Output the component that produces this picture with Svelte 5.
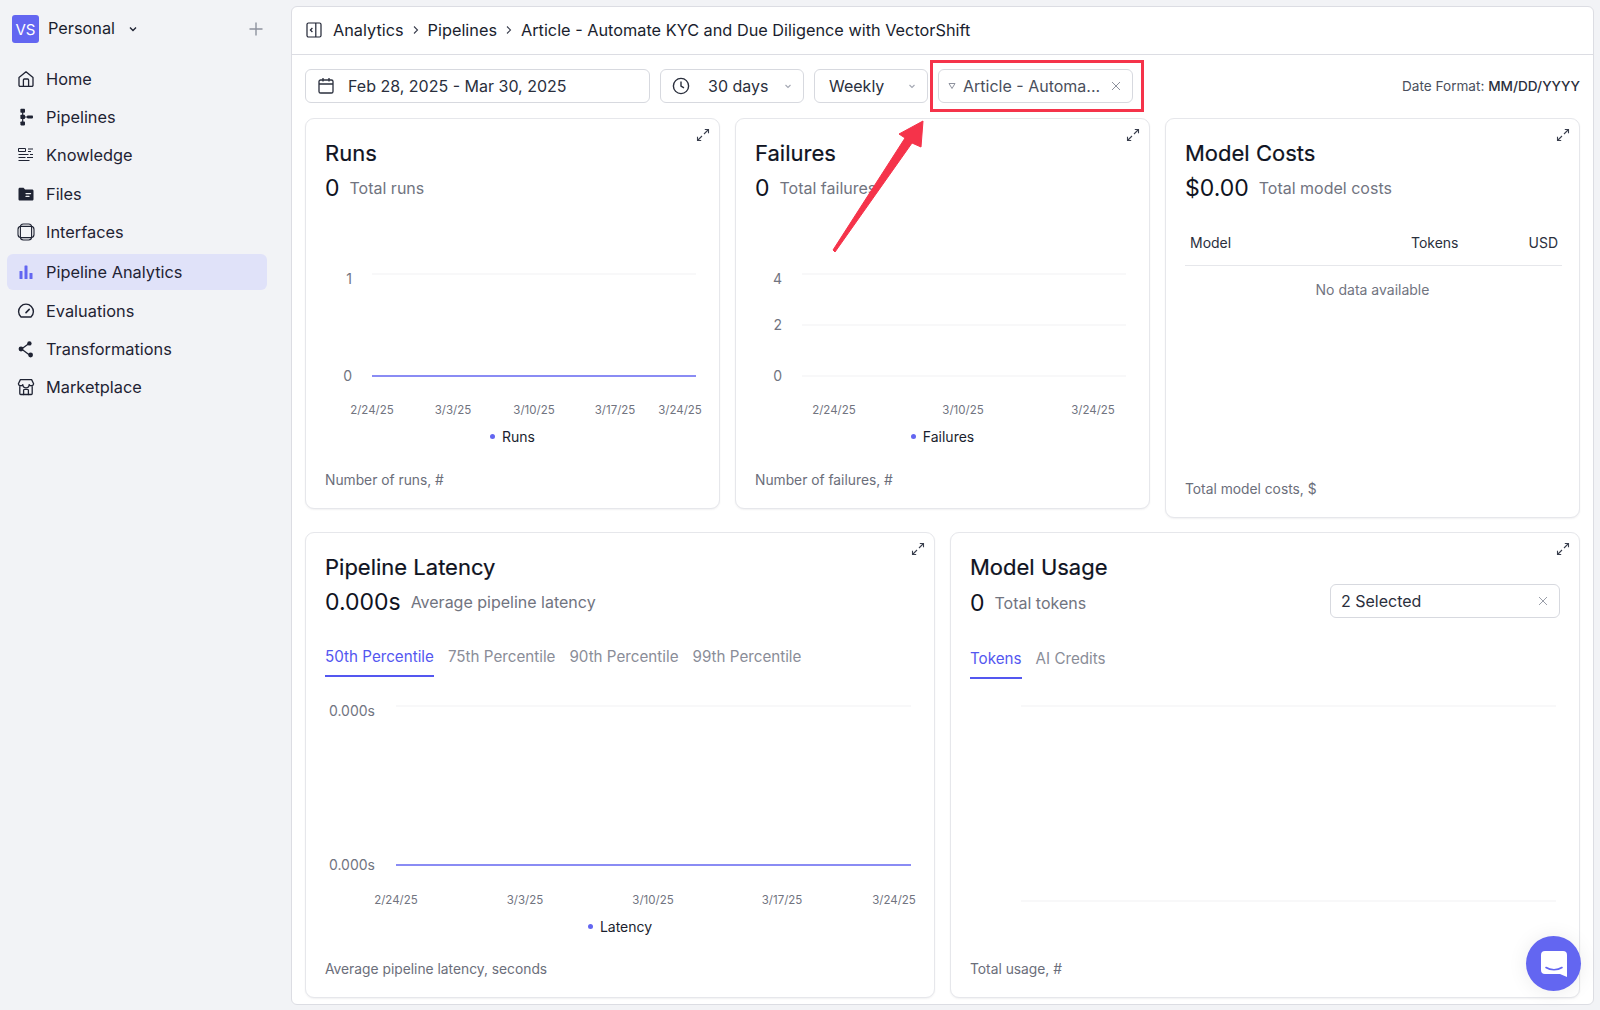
<script>
  const navItems = [
    { label: "Home", icon: "home" },
    { label: "Pipelines", icon: "pipelines" },
    { label: "Knowledge", icon: "knowledge" },
    { label: "Files", icon: "files" },
    { label: "Interfaces", icon: "interfaces" },
    { label: "Pipeline Analytics", icon: "analytics", active: true },
    { label: "Evaluations", icon: "evaluations" },
    { label: "Transformations", icon: "transformations" },
    { label: "Marketplace", icon: "marketplace" },
  ];

  const crumbs = ["Analytics", "Pipelines", "Article - Automate KYC and Due Diligence with VectorShift"];

  // coordinates are local to each chart's svg
  const runsChart = {
    width: 412, height: 222, x1: 66, x2: 390,
    grid: [{ y: 72, label: "1", ly: 78 }, { y: 174, label: "0", ly: 175, line: true }],
    labelX: 46, tickY: 209,
    ticks: [[66, "2/24/25"], [147, "3/3/25"], [228, "3/10/25"], [309, "3/17/25"], [374, "3/24/25"]],
  };
  const failuresChart = {
    width: 412, height: 222, x1: 66, x2: 390,
    grid: [{ y: 72, label: "4", ly: 78 }, { y: 123, label: "2", ly: 124 }, { y: 174, label: "0", ly: 175 }],
    labelX: 46, tickY: 209,
    ticks: [[98, "2/24/25"], [227, "3/10/25"], [357, "3/24/25"]],
  };
  const latencyChart = {
    width: 628, height: 237, x1: 90, x2: 605,
    grid: [{ y: 29, label: "0.000s", ly: 35 }, { y: 188, label: "0.000s", ly: 189, line: true }],
    labelX: 69, tickY: 224,
    ticks: [[90, "2/24/25"], [219, "3/3/25"], [347, "3/10/25"], [476, "3/17/25"], [588, "3/24/25"]],
  };
  const usageChart = {
    width: 628, height: 270, x1: 70, x2: 605,
    grid: [{ y: 27 }, { y: 222 }],
    labelX: 50, tickY: 0, ticks: [],
  };

  const latencyTabs = ["50th Percentile", "75th Percentile", "90th Percentile", "99th Percentile"];
</script>

{#snippet navIcon(name)}
  <svg class="nav-icon" viewBox="0 0 18 18" width="18" height="18" fill="none" stroke="#1f2333" stroke-width="1.3" stroke-linecap="round" stroke-linejoin="round">
    {#if name === "home"}
      <path d="M2 7.6 9 1.8l7 5.8v7.6a1.2 1.2 0 0 1-1.2 1.2H3.2A1.2 1.2 0 0 1 2 15.2Z" />
      <path d="M6.4 16.4V10a1 1 0 0 1 1-1h3.2a1 1 0 0 1 1 1v6.4" />
    {:else if name === "pipelines"}
      <path d="M5.7 3v12M5.7 9H12" stroke-width="1.2" />
      <g fill="#1f2333" stroke="none">
        <rect x="3.4" y="0.8" width="4.6" height="4" rx="0.8" />
        <rect x="3.4" y="6.8" width="4.6" height="4.2" rx="0.8" />
        <rect x="3.4" y="13.4" width="4.6" height="4" rx="0.8" />
        <rect x="10" y="7.6" width="6" height="2.8" rx="0.8" />
      </g>
    {:else if name === "knowledge"}
      <g stroke-width="1" stroke-linecap="butt">
        <rect x="1.5" y="2.5" width="7" height="3" />
        <path d="M11 3h5M11 5.5h3M1.5 8.5h10M13 8.5h3M1.5 11.5h7M10 11.5h6M1.5 14.5h11" />
      </g>
    {:else if name === "files"}
      <path d="M1.5 4.2c0-.8.6-1.4 1.4-1.4h3.6l1.6 1.8h7c.8 0 1.4.6 1.4 1.4v8.2c0 .8-.6 1.4-1.4 1.4H2.9c-.8 0-1.4-.6-1.4-1.4Z" fill="#1f2333" stroke="none" />
      <path d="M9 8.6h4.6M9 11.4h3" stroke="#f2f3f6" stroke-width="1.2" />
    {:else if name === "interfaces"}
      <rect x="1" y="3.4" width="16" height="11.2" rx="3" stroke-width="1.1" />
      <rect x="3.4" y="1" width="11.2" height="16" rx="3" stroke-width="1.1" />
    {:else if name === "analytics"}
      <g fill="#6366f1" stroke="none">
        <rect x="2.5" y="8" width="3" height="8" rx=".6" />
        <rect x="7.5" y="2.5" width="3" height="13.5" rx=".6" />
        <rect x="12.5" y="10" width="3" height="6" rx=".6" />
      </g>
    {:else if name === "evaluations"}
      <path d="M4 15a7.4 7.4 0 1 1 10 0Z" stroke-width="1.4" />
      <path d="m9 10.6 3.2-3.2" stroke-width="1.6" />
    {:else if name === "transformations"}
      <path d="M12 3.5 4.5 9l8 6" stroke-width="1.3" />
      <g fill="#1f2333" stroke="none">
        <circle cx="12.4" cy="3.4" r="2.2" />
        <circle cx="4" cy="9" r="2.4" />
        <circle cx="13.6" cy="15" r="2.4" />
      </g>
    {:else if name === "marketplace"}
      <path d="M3.4 1.6h11.2l2 4.2a2.4 2.4 0 0 1-4.4.8 2.8 2.8 0 0 1-6.4 0 2.4 2.4 0 0 1-4.4-.8Z" />
      <path d="M2.8 8.6v7c0 .5.4.9.9.9h10.6c.5 0 .9-.4.9-.9v-7" />
      <path d="M6.6 16.5v-4.2c0-.5.4-.9.9-.9h3c.5 0 .9.4.9.9v4.2" />
    {/if}
  </svg>
{/snippet}

{#snippet expand()}
  <svg class="expand" viewBox="0 0 14 14" width="14" height="14" fill="none" stroke="#3a3f4e" stroke-width="1.1">
    <path d="M8 6 12.5 1.5M8.8 1.5h3.7v3.7M6 8 1.5 12.5M1.5 8.8v3.7h3.7" />
  </svg>
{/snippet}

{#snippet chevron()}
  <svg class="chev" viewBox="0 0 10 10" width="10" height="10" fill="none" stroke="#a3a7b2" stroke-width="1.1">
    <path d="m2.5 4 2.5 2.5L7.5 4" />
  </svg>
{/snippet}

{#snippet cross(color)}
  <svg viewBox="0 0 10 10" width="10" height="10" fill="none" stroke={color} stroke-width="1">
    <path d="m1 1 8 8M9 1 1 9" />
  </svg>
{/snippet}

{#snippet chart(c)}
  <svg class="chart" width={c.width} height={c.height}>
    {#each c.grid as g}
      <line x1={c.x1} x2={c.x2} y1={g.y} y2={g.y} stroke={g.line ? "#6366f1" : "#f1f2f4"} stroke-width={g.line ? 1.4 : 1.2} />
      {#if g.label}
        <text class="y-label" x={c.labelX} y={g.ly} text-anchor="end" dominant-baseline="middle">{g.label}</text>
      {/if}
    {/each}
    {#each c.ticks as [x, t]}
      <text class="tick" {x} y={c.tickY} text-anchor="middle" dominant-baseline="middle">{t}</text>
    {/each}
  </svg>
{/snippet}

{#snippet legend(name)}
  <div class="legend"><span class="dot"></span>{name}</div>
{/snippet}

<div class="page">
  <aside class="sidebar">
    <div class="workspace">
      <span class="logo">VS</span>
      <span class="ws-name">Personal</span>
      <svg class="ws-chev" viewBox="0 0 10 10" width="10" height="10" fill="none" stroke="#1f2333" stroke-width="1.4"><path d="m2 3.5 3 3 3-3" /></svg>
      <svg class="ws-plus" viewBox="0 0 14 14" width="14" height="14" stroke="#8e929e" stroke-width="1.4"><path d="M7 0.5v13M0.5 7h13" /></svg>
    </div>
    <nav>
      {#each navItems as item}
        <div class="nav-item" class:active={item.active}>
          {@render navIcon(item.icon)}
          <span>{item.label}</span>
        </div>
      {/each}
    </nav>
  </aside>

  <main class="panel">
    <header class="crumbs">
      <svg viewBox="0 0 18 18" width="18" height="18" fill="none" stroke="#1f2333" stroke-width="1.2">
        <rect x="2" y="2" width="14" height="14" rx="1.5" />
        <path d="M10.8 2v14M7.4 7 5.4 9l2 2" />
      </svg>
      {#each crumbs as crumb, i}
        {#if i > 0}
          <svg viewBox="0 0 10 10" width="10" height="10" fill="none" stroke="#3a3f4e" stroke-width="1.1"><path d="m3 1.5 3.5 3.5L3 8.5" /></svg>
        {/if}
        <span>{crumb}</span>
      {/each}
    </header>

    <div class="toolbar">
      <div class="control date">
        <svg viewBox="0 0 18 18" width="18" height="18" fill="none" stroke="#2a2f3d" stroke-width="1.3">
          <rect x="2" y="3" width="14" height="13" rx="1.6" />
          <path d="M2 7h14M6 1v3.4M12 1v3.4" />
        </svg>
        <span>Feb 28, 2025 - Mar 30, 2025</span>
      </div>
      <div class="control days">
        <svg viewBox="0 0 18 18" width="18" height="18" fill="none" stroke="#2a2f3d" stroke-width="1.4">
          <circle cx="9" cy="9" r="7.6" />
          <path d="M9 4.4V9l3 1.8" />
        </svg>
        <span>30 days</span>
        {@render chevron()}
      </div>
      <div class="control weekly">
        <span>Weekly</span>
        {@render chevron()}
      </div>
      <div class="filter-mark">
        <div class="control filter">
          <svg viewBox="0 0 8 8" width="8" height="8" fill="none" stroke="#8e929e" stroke-width="1"><path d="M1 1.5h6L4 6.5Z" /></svg>
          <span>Article - Automa...</span>
          {@render cross("#8e929e")}
        </div>
      </div>
      <div class="date-format">Date Format: <b>MM/DD/YYYY</b></div>
    </div>

    <div class="row top">
      <section class="card">
        {@render expand()}
        <h2>Runs</h2>
        <div class="stat"><strong>0</strong><span>Total runs</span></div>
        {@render chart(runsChart)}
        {@render legend("Runs")}
        <footer>Number of runs, #</footer>
      </section>

      <section class="card">
        {@render expand()}
        <h2>Failures</h2>
        <div class="stat"><strong>0</strong><span>Total failures</span></div>
        {@render chart(failuresChart)}
        {@render legend("Failures")}
        <footer>Number of failures, #</footer>
      </section>

      <section class="card costs">
        {@render expand()}
        <h2>Model Costs</h2>
        <div class="stat"><strong>$0.00</strong><span>Total model costs</span></div>
        <div class="table-head">
          <span class="col-model">Model</span>
          <span>Tokens</span>
          <span class="col-usd">USD</span>
        </div>
        <div class="no-data">No data available</div>
        <footer>Total model costs, $</footer>
      </section>
    </div>

    <div class="row bottom">
      <section class="card">
        {@render expand()}
        <h2>Pipeline Latency</h2>
        <div class="stat"><strong>0.000s</strong><span>Average pipeline latency</span></div>
        <div class="tabs">
          {#each latencyTabs as tab, i}
            <span class="tab" class:selected={i === 0}>{tab}</span>
          {/each}
        </div>
        {@render chart(latencyChart)}
        {@render legend("Latency")}
        <footer>Average pipeline latency, seconds</footer>
      </section>

      <section class="card">
        {@render expand()}
        <h2>Model Usage</h2>
        <div class="usage-head">
          <div class="stat"><strong>0</strong><span>Total tokens</span></div>
          <div class="control selected-box">
            <span>2 Selected</span>
            {@render cross("#9a9ea9")}
          </div>
        </div>
        <div class="tabs usage-tabs">
          <span class="tab selected">Tokens</span>
          <span class="tab">AI Credits</span>
        </div>
        {@render chart(usageChart)}
        <footer class="push">Total usage, #</footer>
      </section>
    </div>
  </main>

  <!-- annotation arrow drawn over the screenshot -->
  <svg class="arrow" viewBox="0 0 100 140" width="100" height="140">
    <path d="M93 5 69 18l6 4L3 134l2 2L82 27l9 4Z" fill="#f5334a" stroke="#f5334a" stroke-width="1" stroke-linejoin="round" />
  </svg>

  <button class="chat" aria-label="Chat">
    <svg viewBox="0 0 28 28" width="28" height="28">
      <path d="M5 1h18a4 4 0 0 1 4 4v22l-7-3H5a4 4 0 0 1-4-4V5a4 4 0 0 1 4-4Z" fill="#fff" />
      <path d="M6 17.5c4.5 3 11.5 3 16 0" fill="none" stroke="#6366f1" stroke-width="1.6" stroke-linecap="round" />
    </svg>
  </button>
</div>

<style>
  :global(body) {
    margin: 0;
    background: #f2f3f6;
  }

  .page {
    display: flex;
    width: 1600px;
    height: 1010px;
    font-family: Inter, "Liberation Sans", sans-serif;
    color: #1a1e2e;
    overflow: hidden;
    position: relative;
  }

  .sidebar {
    width: 291px;
    flex: none;
    box-sizing: border-box;
    padding: 15px 24px 0 7px;
  }

  .workspace {
    display: flex;
    align-items: center;
    height: 28px;
    padding-left: 5px;
    margin-bottom: 16.5px;
  }

  .logo {
    width: 27px;
    height: 28px;
    border-radius: 3px;
    background: #6366f1;
    color: #fff;
    font-size: 15px;
    display: flex;
    align-items: center;
    justify-content: center;
  }

  .ws-name {
    margin: -2px 0 0 9px;
    font-size: 16.3px;
  }

  .ws-chev {
    margin-left: 13px;
  }

  .ws-plus {
    margin-left: auto;
    margin-right: 4px;
  }

  nav {
    display: flex;
    flex-direction: column;
  }

  .nav-item {
    display: flex;
    align-items: center;
    gap: 11px;
    height: 38.4px;
    padding-left: 10px;
    font-size: 16.35px;
    color: #1f2333;
    box-sizing: border-box;
  }

  .nav-item.active {
    height: 36px;
    margin: 3px 0 1px;
    background: #e0e2f9;
    border-radius: 6px;
  }

  .nav-icon {
    flex: none;
  }

  .panel {
    flex: 1;
    margin: 6px 6px 5px 0;
    background: #fff;
    border: 1px solid #dcdde3;
    border-radius: 6px;
    box-sizing: border-box;
    min-width: 0;
  }

  .crumbs {
    display: flex;
    align-items: center;
    gap: 7px;
    height: 48px;
    box-sizing: border-box;
    padding: 0 0 2px 13px;
    border-bottom: 1px solid #dcdde3;
    font-size: 16.3px;
    color: #1a1e2e;
  }

  .crumbs svg:first-child {
    margin-right: 3px;
  }

  .toolbar {
    display: flex;
    align-items: center;
    gap: 10px;
    padding: 14px 13px 15px;
  }

  .control {
    display: flex;
    align-items: center;
    height: 34px;
    box-sizing: border-box;
    border: 1px solid #d7d9df;
    border-radius: 6px;
    font-size: 16px;
    color: #2a2f3d;
    background: #fff;
    white-space: nowrap;
  }

  .control svg {
    flex: none;
  }

  .date {
    width: 345px;
    padding-left: 11px;
    gap: 13px;
  }

  .days {
    width: 144px;
    padding: 0 10px 0 11px;
  }

  .days span {
    margin-left: 18px;
  }

  .days span,
  .weekly span {
    flex: 1;
  }

  .weekly {
    width: 114px;
    padding: 0 10px 0 14px;
  }

  .filter-mark {
    margin: -9px 0 -9px -8px;
    border: 3px solid #f5334a;
    padding: 6px 8px 6px 5px;
  }

  .filter {
    width: 195px;
    padding: 0 11px 0 9px;
    gap: 7px;
    color: #4a4f5c;
  }

  .filter span {
    flex: 1;
  }

  .date-format {
    margin-left: auto;
    font-size: 13.6px;
    color: #4a4f5c;
  }

  .date-format b {
    font-weight: 500;
    color: #2a2f3d;
  }

  .row {
    display: flex;
    gap: 15px;
    padding: 0 13px;
    margin-bottom: 14px;
  }

  .row.top {
    align-items: flex-start;
  }

  .card {
    position: relative;
    flex: 1;
    min-width: 0;
    box-sizing: border-box;
    display: flex;
    flex-direction: column;
    padding-bottom: 18px;
    background: #fff;
    border: 1px solid #e6e7eb;
    border-radius: 9px;
    box-shadow: 0 1px 2px rgba(20, 24, 40, 0.06);
  }

  .card.costs {
    height: 400px;
  }

  .expand {
    position: absolute;
    top: 9px;
    right: 9px;
  }

  h2 {
    margin: 19px 19px 6px;
    font-size: 22px;
    line-height: 30px;
    font-weight: 400;
    color: #0f1322;
    -webkit-text-stroke: 0.2px #0f1322;
  }

  .stat {
    display: flex;
    align-items: center;
    gap: 10px;
    height: 28px;
    margin: 0 19px;
  }

  .stat strong {
    font-size: 23px;
    font-weight: 400;
    color: #0f1322;
  }

  .stat span {
    font-size: 16px;
    color: #71747f;
  }

  .chart {
    display: block;
    flex: none;
  }

  .y-label {
    font-size: 14px;
    fill: #71747f;
  }

  .tick {
    font-size: 11.5px;
    fill: #71747f;
  }

  .legend {
    display: flex;
    align-items: center;
    justify-content: center;
    gap: 7px;
    height: 24px;
    margin-bottom: 22px;
    font-size: 14px;
    color: #1a1e2e;
  }

  .bottom .legend {
    margin-bottom: 21px;
  }

  .dot {
    width: 5px;
    height: 5px;
    border-radius: 50%;
    background: #6366f1;
  }

  footer {
    margin: 0 19px;
    font-size: 13.8px;
    line-height: 20px;
    color: #6b6e7a;
  }

  .table-head {
    display: flex;
    align-items: center;
    height: 38px;
    margin: 26px 17px 0 19px;
    padding: 0 4px 8px 5px;
    box-sizing: border-box;
    border-bottom: 1px solid #e6e7eb;
    font-size: 14px;
    color: #2a2f3d;
  }

  .col-model {
    flex: 1;
  }

  .col-usd {
    margin-left: 70px;
  }

  .no-data {
    margin-top: 14px;
    text-align: center;
    font-size: 14px;
    line-height: 20px;
    color: #71747f;
  }

  .costs footer,
  .push {
    margin-top: auto;
  }

  .tabs {
    display: flex;
    gap: 14px;
    margin: 24px 19px 0;
  }

  .tab {
    height: 37px;
    line-height: 34px;
    box-sizing: border-box;
    font-size: 15.2px;
    color: #8a8d98;
    border-bottom: 2px solid transparent;
  }

  .tab.selected {
    color: #5457f0;
    border-bottom-color: #5457f0;
  }

  .usage-head {
    display: flex;
    align-items: flex-start;
    justify-content: space-between;
    height: 28px;
  }

  .usage-head .stat {
    margin-top: 1px;
  }

  .selected-box {
    width: 230px;
    margin: -4px 19px 0 0;
    padding: 0 11px 0 10px;
    justify-content: space-between;
  }

  .usage-tabs {
    margin-top: 26px;
  }

  .arrow {
    position: absolute;
    left: 830px;
    top: 116px;
  }

  .chat {
    position: absolute;
    left: 1526px;
    top: 936px;
    width: 55px;
    height: 55px;
    border: 0;
    padding: 0;
    border-radius: 50%;
    background: #6366f1;
    box-shadow: 0 1px 20px rgba(0, 0, 0, 0.08);
    display: flex;
    align-items: center;
    justify-content: center;
  }
</style>
